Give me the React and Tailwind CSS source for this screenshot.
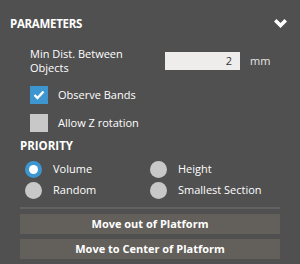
export default function App() {
    return (
        <div className="w-[300px] h-[264px] bg-[#505050] text-white font-['Open_Sans',sans-serif] overflow-hidden">
            {/* Header */}
            <div className="flex items-center justify-between pl-[10px] pr-[12px] pt-[13px] h-[34px]">
                <span className="text-[11.5px] font-bold tracking-[-0.3px]">PARAMETERS</span>
                <svg width="15" height="11" viewBox="0 0 15 11">
                    <path d="M1 3.5 L3.5 1 L7.5 5 L11.5 1 L14 3.5 L7.5 10 Z" fill="white" />
                </svg>
            </div>

            {/* Min distance */}
            <div className="flex items-center pl-[30px] mt-[12px] h-[30px]">
                <div className="w-[135px] text-[11px] leading-[14px]">Min Dist. Between<br />Objects</div>
                <div className="w-[75px] h-[18px] bg-[#eeedeb] text-[#333] text-[11px] text-right pr-[8px] leading-[18px]">2</div>
                <span className="ml-[10px] text-[11px] text-[#e8e8e8]">mm</span>
            </div>

            {/* Checkboxes */}
            <div className="flex items-center pl-[30px] mt-[10px] h-[18px] gap-[10px]">
                <div className="w-[18px] h-[18px] bg-[#3d96d0] flex items-center justify-center">
                    <svg width="12" height="10" viewBox="0 0 12 10">
                        <path d="M1.5 5 L4.5 8 L10.5 1.5" stroke="white" strokeWidth="2.4" fill="none" />
                    </svg>
                </div>
                <span className="text-[11px]">Observe Bands</span>
            </div>
            <div className="flex items-center pl-[30px] mt-[10px] h-[18px] gap-[10px]">
                <div className="w-[18px] h-[18px] bg-[#c8c8c8]" />
                <span className="text-[11px]">Allow Z rotation</span>
            </div>

            {/* Priority */}
            <div className="pl-[20px] mt-[6px] text-[11.5px] font-bold h-[16px] leading-[16px]">PRIORITY</div>
            <div className="grid grid-cols-[125px_1fr] pl-[25px] mt-[7px] gap-y-[4px] text-[11px]">
                <div className="flex items-center gap-[11px] h-[17px]">
                    <div className="w-[17px] h-[17px] rounded-full bg-[#3d96d0] flex items-center justify-center">
                        <div className="w-[9px] h-[9px] rounded-full bg-white" />
                    </div>
                    <span>Volume</span>
                </div>
                <div className="flex items-center gap-[11px] h-[17px]">
                    <div className="w-[17px] h-[17px] rounded-full bg-[#c8c8c8]" />
                    <span>Height</span>
                </div>
                <div className="flex items-center gap-[11px] h-[17px]">
                    <div className="w-[17px] h-[17px] rounded-full bg-[#c8c8c8]" />
                    <span>Random</span>
                </div>
                <div className="flex items-center gap-[11px] h-[17px]">
                    <div className="w-[17px] h-[17px] rounded-full bg-[#c8c8c8]" />
                    <span>Smallest Section</span>
                </div>
            </div>

            {/* Actions */}
            <div className="mx-[20px] mt-[8px] h-[2px] bg-[#626262]" />
            <div className="mx-[20px] mt-[5px] flex flex-col gap-[5px]">
                <button className="h-[20px] bg-[#635f5b] text-[11px] font-bold text-white">Move out of Platform</button>
                <button className="h-[20px] bg-[#635f5b] text-[11px] font-bold text-white">Move to Center of Platform</button>
            </div>
        </div>
    );
}
